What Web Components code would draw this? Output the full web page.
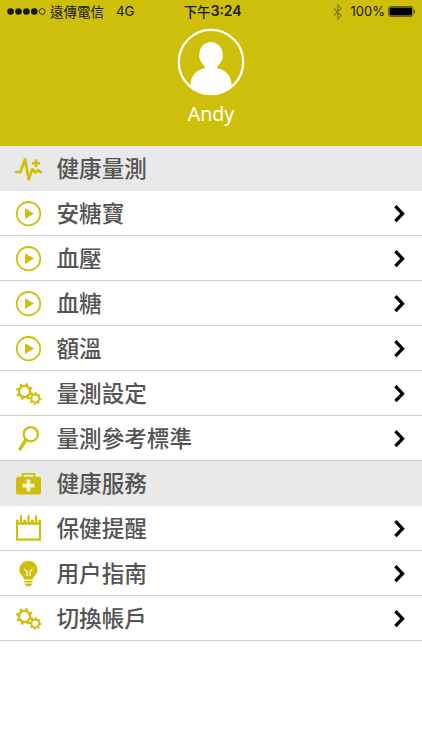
<!DOCTYPE html>
<html lang="zh-Hant"><head><meta charset="utf-8"><title>健康量測</title>
<style>
body{margin:0;background:#fff;font-family:"Noto Sans CJK TC",sans-serif;--accent:#cebf0a}
</style></head><body>
<health-app></health-app>
<script>
const gear=(cx,cy,r,w,n,rot,ring,tooth)=>{
  let d='';
  for(let i=0;i<n;i++){const a=rot+i*2*Math.PI/n;
    d+=`M${cx+Math.cos(a)*r} ${cy+Math.sin(a)*r}L${cx+Math.cos(a)*(r+w)} ${cy+Math.sin(a)*(r+w)}`;}
  return `<circle cx="${cx}" cy="${cy}" r="${r}" stroke-width="${ring}"/><path d="${d}" stroke-width="${tooth}"/>`;
};
const icons={
  pulse:'<path d="M16 26h4.500L25 13.300l3.700 20 3.600-10 3.200 3.200 2.500-2.300 3 2" stroke-width="2.7" stroke-linecap="round" stroke-linejoin="round"/><path d="M36 13.200v8M32 17.200h8" stroke-width="2.600"/>',
  play:'<circle cx="28.5" cy="22.7" r="11.7" stroke-width="1.8"/><path d="M25 17.300v10.600l9-5.300z" fill="currentColor" stroke="none"/>',
  gears:gear(24.5,20.5,5.6,3,8,.3,2.4,2.5)+gear(35.2,27.5,3.9,2.4,8,.1,2,1.9),
  search:'<circle cx="30.8" cy="18.2" r="7.1" stroke-width="2.3"/><path d="M25.800 24L20 33" stroke-width="3.400" stroke-linecap="round"/>',
  kit:'<path d="M22.600 17v-4.200h11.800V17" stroke-width="1.8" stroke-linejoin="round"/><rect x="16" y="15.800" width="25" height="17.600" rx="2" fill="currentColor" stroke="none"/><path d="M28.500 18.600v12M22.500 24.600h12" stroke="#f4f3e4" stroke-width="3.6"/>',
  calendar:'<path d="M16 13.700h25v21H16z" fill="currentColor" stroke="none"/><path d="M18 18.800h21v13.700H18z" fill="#fff" stroke="none"/><path d="M21 9v7.200M28.500 9v7.200M36 9v7.200" stroke="#fff" stroke-width="4.400"/><path d="M21 10v5.800M28.500 10v5.800M36 10v5.800" stroke-width="2.2" stroke-linecap="round"/>',
  bulb:'<path d="M28.400 9.700a9.100 9.100 0 0 0-9.100 9.100c0 4.800 4 5.900 4.900 9.800h8.400c.9-3.900 4.900-5 4.900-9.800a9.100 9.100 0 0 0-9.100-9.100zM24.200 29.700h8.400v1.700h-8.400zM24.600 32.400h7.600c-.2 1.500-1.400 1.900-2 2.800h-3.600c-.6-.9-1.800-1.300-2-2.800z" fill="currentColor" stroke="none"/><path d="M27 25v-4.500l-2.600-2.300M29.900 25v-4.500l2.600-2.300" stroke="#fff" stroke-width="1.1"/>'
};
const define=(name,html)=>customElements.define(name,class extends HTMLElement{
  constructor(){super();this.attachShadow({mode:'open'}).innerHTML=html;}
});
customElements.define('menu-icon',class extends HTMLElement{
  connectedCallback(){
    if(!this.shadowRoot)this.attachShadow({mode:'open'});
    this.shadowRoot.innerHTML=`<style>:host{display:block;width:28px;height:45px;color:var(--accent)}svg{display:block}</style>
    <svg width="28" height="45" viewBox="14 0 28 45" fill="none" stroke="currentColor">${icons[this.getAttribute('name')]}</svg>`;
  }
});
customElements.define('menu-row',class extends HTMLElement{
  connectedCallback(){
    if(!this.shadowRoot)this.attachShadow({mode:'open'});
    const head=this.hasAttribute('section');
    this.shadowRoot.innerHTML=`<style>
    :host{display:flex;box-sizing:border-box;height:45px;padding:0 14px;align-items:stretch;border-bottom:1px solid #cdcdcd;color:#545454;font-size:22.6px;font-weight:500;line-height:44px}
    :host([section]){background:#e9e9e9;border-bottom-color:#e9e9e9}
    span{flex:1;margin-left:14.5px;white-space:nowrap}
    svg{display:block;margin-right:2px}</style>
    <menu-icon name="${this.getAttribute('icon')}"></menu-icon><span><slot></slot></span>
    ${head?'':'<svg width="14" height="45" fill="none" stroke="#000" stroke-width="3.3"><path d="M3.400 15.200L10.500 22.700 3.400 30.200"/></svg>'}`;
  }
});
define('status-bar',`<style>
:host{display:grid;grid-template-columns:1fr auto 1fr;align-items:center;height:23px;padding:0 6px 0 7px;color:#17160a;font-size:13.5px;line-height:23px;white-space:nowrap}
div{display:flex;align-items:center}svg{display:block}
.num{font-family:Inter,sans-serif}.right{justify-content:flex-end}
.time{font-weight:500;padding-left:2px}.time .num{font-weight:600;font-size:13.8px}
</style>
<div><svg width="39" height="9"><g fill="#17160a"><circle cx="3.6" cy="4.5" r="3.3"/><circle cx="11.5" cy="4.5" r="3.3"/><circle cx="19.4" cy="4.5" r="3.3"/><circle cx="27.3" cy="4.5" r="3.3"/></g><circle cx="35.2" cy="4.5" r="2.9" fill="none" stroke="#17160a" stroke-width=".8"/></svg>
<span style="margin-left:4px">遠傳電信</span><span class="num" style="margin-left:12px;font-size:13.3px">4G</span></div>
<div class="time"><span>下午</span><span class="num">3:24</span></div>
<div class="right"><svg width="10" height="16" fill="none" stroke="#807812" stroke-width="1.1"><path d="M1 4.500l7 7L4.800 15V1L8 4.500l-7 7"/></svg>
<span class="num" style="margin:0 3px 0 8px;font-size:13px">100%</span>
<svg width="28" height="11"><rect x=".5" y=".5" width="24.5" height="10" rx="2" fill="none" stroke="#4d480a" stroke-width=".8"/><rect x="1.5" y="1.5" width="22.5" height="8" rx="1"/><path d="M26 3.500q1.600 2 0 4z"/></svg></div>`);
define('user-profile',`<style>
:host{display:flex;flex-direction:column;align-items:center;height:123px;color:#fff}
svg{display:block;margin-top:5px}
span{font:19.6px/28px "Noto Sans",sans-serif;margin-top:3.5px}
</style>
<svg width="68" height="68"><defs><clipPath id="c"><circle cx="34" cy="34" r="33"/></clipPath></defs>
<circle cx="34" cy="34" r="32.2" fill="none" stroke="#fff" stroke-width="2.3"/>
<g fill="#fff" clip-path="url(#c)"><ellipse cx="34" cy="27" rx="11.8" ry="13"/><path d="M27 36h14l-1 4c9 2 14.500 8 14.500 17v11h-41V57c0-9 5.500-15 14.500-17z"/></g></svg>
<span><slot></slot></span>`);
define('health-app',`<style>
:host{display:block;height:750px;background:#fff}
header{background:var(--accent);height:146px}
</style>
<header><status-bar></status-bar><user-profile>Andy</user-profile></header>
<main>
<menu-row section icon="pulse">健康量測</menu-row>
<menu-row icon="play">安糖寶</menu-row>
<menu-row icon="play">血壓</menu-row>
<menu-row icon="play">血糖</menu-row>
<menu-row icon="play">額溫</menu-row>
<menu-row icon="gears">量測設定</menu-row>
<menu-row icon="search">量測參考標準</menu-row>
<menu-row section icon="kit">健康服務</menu-row>
<menu-row icon="calendar">保健提醒</menu-row>
<menu-row icon="bulb">用户指南</menu-row>
<menu-row icon="gears">切換帳戶</menu-row>
</main>`);
</script></body></html>
